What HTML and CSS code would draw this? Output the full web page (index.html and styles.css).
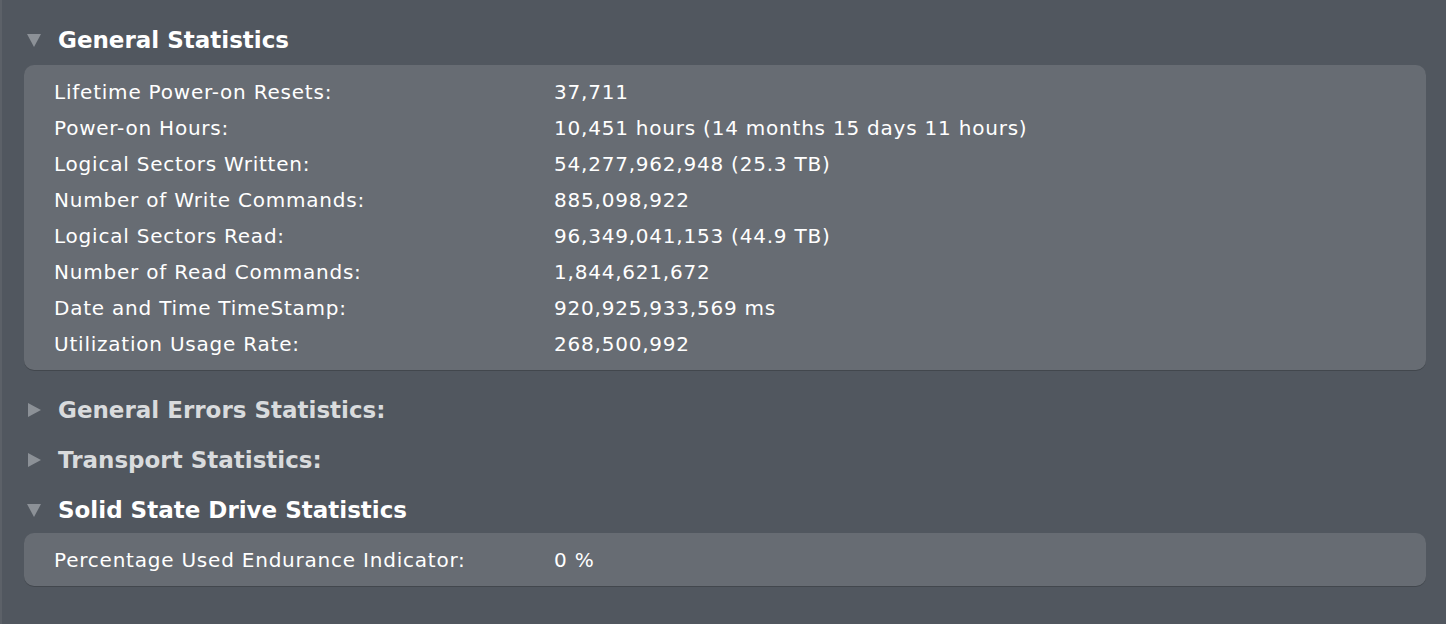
FILE: index.html
```html
<!DOCTYPE html>
<html>
<head>
<meta charset="utf-8">
<link rel="stylesheet" href="styles.css">
</head>
<body>
<div class="edge-mark"></div>
<main class="content">
  <section class="group">
    <div class="header open">
      <svg class="tri" width="16" height="16" viewBox="0 0 16 16"><polygon points="1,2 15,2 8,15" /></svg>
      <span>General Statistics</span>
    </div>
    <div class="panel">
      <div class="row"><span class="label">Lifetime Power-on Resets:</span><span class="value">37,711</span></div>
      <div class="row"><span class="label">Power-on Hours:</span><span class="value">10,451 hours (14 months 15 days 11 hours)</span></div>
      <div class="row"><span class="label">Logical Sectors Written:</span><span class="value">54,277,962,948 (25.3 TB)</span></div>
      <div class="row"><span class="label">Number of Write Commands:</span><span class="value">885,098,922</span></div>
      <div class="row"><span class="label">Logical Sectors Read:</span><span class="value">96,349,041,153 (44.9 TB)</span></div>
      <div class="row"><span class="label">Number of Read Commands:</span><span class="value">1,844,621,672</span></div>
      <div class="row"><span class="label">Date and Time TimeStamp:</span><span class="value">920,925,933,569 ms</span></div>
      <div class="row"><span class="label">Utilization Usage Rate:</span><span class="value">268,500,992</span></div>
    </div>
  </section>
  <section class="group collapsed-first">
    <div class="header closed">
      <svg class="tri" width="16" height="16" viewBox="0 0 16 16"><polygon points="2,1 15,8 2,15" /></svg>
      <span>General Errors Statistics:</span>
    </div>
  </section>
  <section class="group">
    <div class="header closed">
      <svg class="tri" width="16" height="16" viewBox="0 0 16 16"><polygon points="2,1 15,8 2,15" /></svg>
      <span>Transport Statistics:</span>
    </div>
  </section>
  <section class="group last">
    <div class="header open">
      <svg class="tri" width="16" height="16" viewBox="0 0 16 16"><polygon points="1,2 15,2 8,15" /></svg>
      <span>Solid State Drive Statistics</span>
    </div>
    <div class="panel">
      <div class="row"><span class="label">Percentage Used Endurance Indicator:</span><span class="value">0 %</span></div>
    </div>
  </section>
</main>
</body>
</html>
```
FILE: styles.css
```css
html, body {
  margin: 0;
  padding: 0;
  height: 100%;
}
body {
  background: #51575f;
  border-left: 2px solid #5c6168;
  box-sizing: border-box;
  font-family: "DejaVu Sans", "Liberation Sans", sans-serif;
  color: #ffffff;
  overflow: hidden;
  position: relative;
}
.edge-mark {
  position: absolute;
  left: -2px;
  top: 139px;
  width: 2px;
  height: 43px;
  background: #3f78e3;
}
.content {
  padding: 15px 20px 0 22px;
}
.header {
  height: 50px;
  box-sizing: border-box;
  display: flex;
  align-items: center;
  gap: 16px;
  padding-left: 2px;
  font-weight: bold;
  font-size: 23px;
}
.header .tri {
  flex: none;
}
.header .tri polygon {
  fill: #8c9197;
}
.header.open span {
  color: #ffffff;
}
.header.closed span {
  color: #d9dbdd;
}
.panel {
  background: #676c73;
  border-radius: 10px;
  box-shadow: 0 1px 0 rgba(0, 0, 0, 0.18);
  padding: 9px 30px 8px 30px;
}
.row {
  display: grid;
  grid-template-columns: 500px 1fr;
  height: 36px;
  align-items: center;
  font-size: 20px;
  letter-spacing: 0.78px;
  color: #ffffff;
}
.collapsed-first {
  margin-top: 15px;
}
.group.last .header {
  height: 48px;
  padding-top: 2px;
}
```
